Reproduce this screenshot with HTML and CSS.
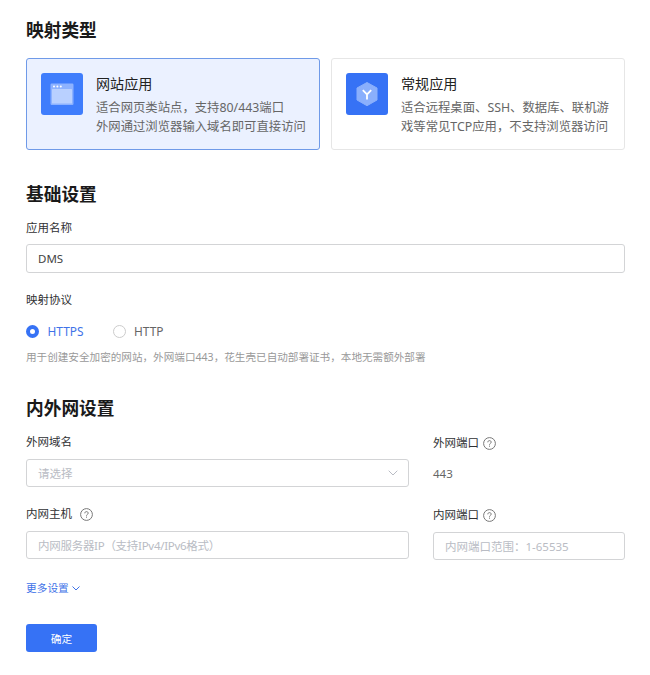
FILE: index.html
```html
<!DOCTYPE html>
<html lang="zh-CN">
<head>
<meta charset="utf-8">
<title>映射设置</title>
<link rel="stylesheet" href="styles.css">
</head>
<body>
<main class="form">
  <section>
    <h2 class="heading">映射类型</h2>
    <div class="types">
      <div class="type type-active">
        <svg class="type-icon" viewBox="0 0 42 42">
          <rect width="42" height="42" rx="3" fill="#3f7dfc"/>
          <rect x="9.5" y="10.5" width="23" height="21.5" rx="1.2" fill="#8db2ff"/>
          <rect x="11" y="16" width="20" height="14.5" rx=".6" fill="#b9d0ff"/>
          <g fill="#fff"><circle cx="13" cy="13.4" r="1"/><circle cx="16.4" cy="13.4" r="1"/><circle cx="19.8" cy="13.4" r="1"/></g>
        </svg>
        <div class="type-text">
          <h3 class="type-title">网站应用</h3>
          <p class="type-desc">适合网页类站点，支持80/443端口<br>外网通过浏览器输入域名即可直接访问</p>
        </div>
      </div>
      <div class="type">
        <svg class="type-icon" viewBox="0 0 42 42">
          <rect width="42" height="42" rx="3" fill="#3672f5"/>
          <path d="M21 9.5 31 15v12l-10 5.7L11 27V15z" fill="#8aaffc" stroke="#8aaffc" stroke-width="1" stroke-linejoin="round"/>
          <path d="M16.8 17.2 21 21.5l4.2-4.3M21 21.5v5" fill="none" stroke="#fff" stroke-width="1.8"/>
        </svg>
        <div class="type-text">
          <h3 class="type-title">常规应用</h3>
          <p class="type-desc">适合远程桌面、SSH、数据库、联机游<br>戏等常见TCP应用，不支持浏览器访问</p>
        </div>
      </div>
    </div>
  </section>

  <section class="basic">
    <h2 class="heading">基础设置</h2>
    <div class="label">应用名称</div>
    <div class="input input-filled">DMS</div>
    <div class="label label-protocol">映射协议</div>
    <div class="radios">
      <span class="radio radio-on"><i class="dot"></i>HTTPS</span>
      <span class="radio"><i class="dot"></i>HTTP</span>
    </div>
    <p class="hint">用于创建安全加密的网站，外网端口443，花生壳已自动部署证书，本地无需额外部署</p>
  </section>

  <section class="network">
    <h2 class="heading">内外网设置</h2>
    <div class="columns">
      <div class="column">
        <div class="label">外网域名</div>
        <div class="input">请选择
          <svg class="arrow" viewBox="0 0 10 6"><path d="M.7.7 5 5 9.3.7" fill="none" stroke="currentColor"/></svg>
        </div>
        <div class="label label-next">内网主机
          <svg class="help help-wide" viewBox="0 0 13 13"><circle cx="6.5" cy="6.5" r="5.9"/><path d="M4.8 5.3c0-1 .7-1.7 1.7-1.7s1.7.7 1.7 1.6c0 1.2-1.7 1.2-1.7 2.5M6.5 8.6v1.1"/></svg>
        </div>
        <div class="input input-host">内网服务器IP（支持IPv4/IPv6格式）</div>
      </div>
      <div class="column column-port">
        <div class="label">外网端口
          <svg class="help" viewBox="0 0 13 13"><circle cx="6.5" cy="6.5" r="5.9"/><path d="M4.8 5.3c0-1 .7-1.7 1.7-1.7s1.7.7 1.7 1.6c0 1.2-1.7 1.2-1.7 2.5M6.5 8.6v1.1"/></svg>
        </div>
        <div class="port">443</div>
        <div class="label label-next">内网端口
          <svg class="help" viewBox="0 0 13 13"><circle cx="6.5" cy="6.5" r="5.9"/><path d="M4.8 5.3c0-1 .7-1.7 1.7-1.7s1.7.7 1.7 1.6c0 1.2-1.7 1.2-1.7 2.5M6.5 8.6v1.1"/></svg>
        </div>
        <div class="input">内网端口范围：1-65535</div>
      </div>
    </div>
  </section>

  <div class="more">更多设置
    <svg class="more-arrow" viewBox="0 0 8 5"><path d="M.5.5 4 4 7.5.5" fill="none" stroke="currentColor"/></svg>
  </div>
  <button class="submit">确定</button>
</main>
</body>
</html>
```

FILE: styles.css
```css
* {
  box-sizing: border-box;
}

body,
h2,
h3,
p {
  margin: 0;
}

body {
  background: #fff;
  color: #303133;
  font-family: "Noto Sans", "Noto Sans CJK SC", sans-serif;
  font-size: 11.5px;
}

.form {
  width: 598.5px;
  margin-left: 26px;
  padding-top: 18px;
  white-space: nowrap;
}

.heading {
  height: 24px;
  line-height: 24px;
  font-size: 17.7px;
  font-weight: 700;
  color: #1a1a1a;
}

.types {
  display: grid;
  grid-template-columns: 294px 294px;
  gap: 11px;
  margin-top: 16px;
}

.type {
  display: flex;
  gap: 13px;
  height: 92px;
  padding: 14px 0 0 14px;
  border: 1px solid #e6e6e6;
  border-radius: 3px;
}

.type-active {
  border-color: #6f9ae8;
  background: #ebf1ff;
}

.type-icon {
  flex: none;
  width: 42px;
  height: 42px;
}

.type-title {
  height: 20px;
  margin-top: 1px;
  line-height: 20px;
  font-size: 14.1px;
  font-weight: 400;
  color: #222;
}

.type-desc {
  margin-top: 4px;
  line-height: 19px;
  font-size: 12.35px;
  color: #666;
}

.basic {
  margin-top: 31px;
}

.basic .heading,
.network .heading {
  padding-top: 1px;
}

.label {
  display: flex;
  align-items: center;
  height: 16px;
  margin: 15px 0 8px;
  line-height: 16px;
}

.input {
  display: flex;
  align-items: center;
  justify-content: space-between;
  height: 28px;
  padding: 0 10px 1px 11px;
  border: 1px solid #d3d4d6;
  border-radius: 3px;
  color: #b9bcc4;
}

.input-filled {
  height: 29px;
  padding-bottom: 0;
  color: #444;
}

.input-host {
  letter-spacing: -0.28px;
}

.label-protocol {
  margin: 19px 0 0;
}

.radios {
  display: flex;
  gap: 29px;
  margin-top: 14px;
}

.radio {
  display: flex;
  align-items: center;
  gap: 8.5px;
  height: 18px;
  font-size: 11.9px;
  line-height: 16px;
  color: #666;
}

.radio-on {
  color: #3f73e8;
}

.dot {
  width: 13px;
  height: 13px;
  border: 1px solid #ccc;
  border-radius: 50%;
}

.radio-on .dot {
  border: 4.5px solid #3672f5;
}

.hint {
  height: 16px;
  margin-top: 9px;
  line-height: 16px;
  font-size: 10.6px;
  color: #999;
}

.network {
  margin-top: 30px;
}

.network .label {
  margin-bottom: 9px;
}

.columns {
  display: grid;
  grid-template-columns: 383px 191.5px;
  gap: 24px;
}

.column-port {
  padding-top: 1px;
}

.network .label-next {
  margin-top: 19px;
}

.help {
  width: 13px;
  height: 13px;
  margin-left: 4px;
  fill: none;
  stroke: #777;
  stroke-width: 1;
}

.help-wide {
  margin-left: 8px;
}

.arrow {
  width: 10px;
  height: 6px;
}

.port {
  height: 28px;
  line-height: 28px;
  color: #666;
}

.more {
  display: flex;
  align-items: center;
  height: 16px;
  margin-top: 20px;
  line-height: 16px;
  font-size: 10.7px;
  color: #3f73e8;
}

.more-arrow {
  width: 8px;
  height: 5px;
  margin-left: 3px;
}

.submit {
  display: block;
  width: 71px;
  height: 28px;
  margin-top: 28px;
  padding: 0;
  border: 0;
  border-radius: 3px;
  background: #3672f5;
  color: #fff;
  font-family: inherit;
  font-size: 10.7px;
}
```
